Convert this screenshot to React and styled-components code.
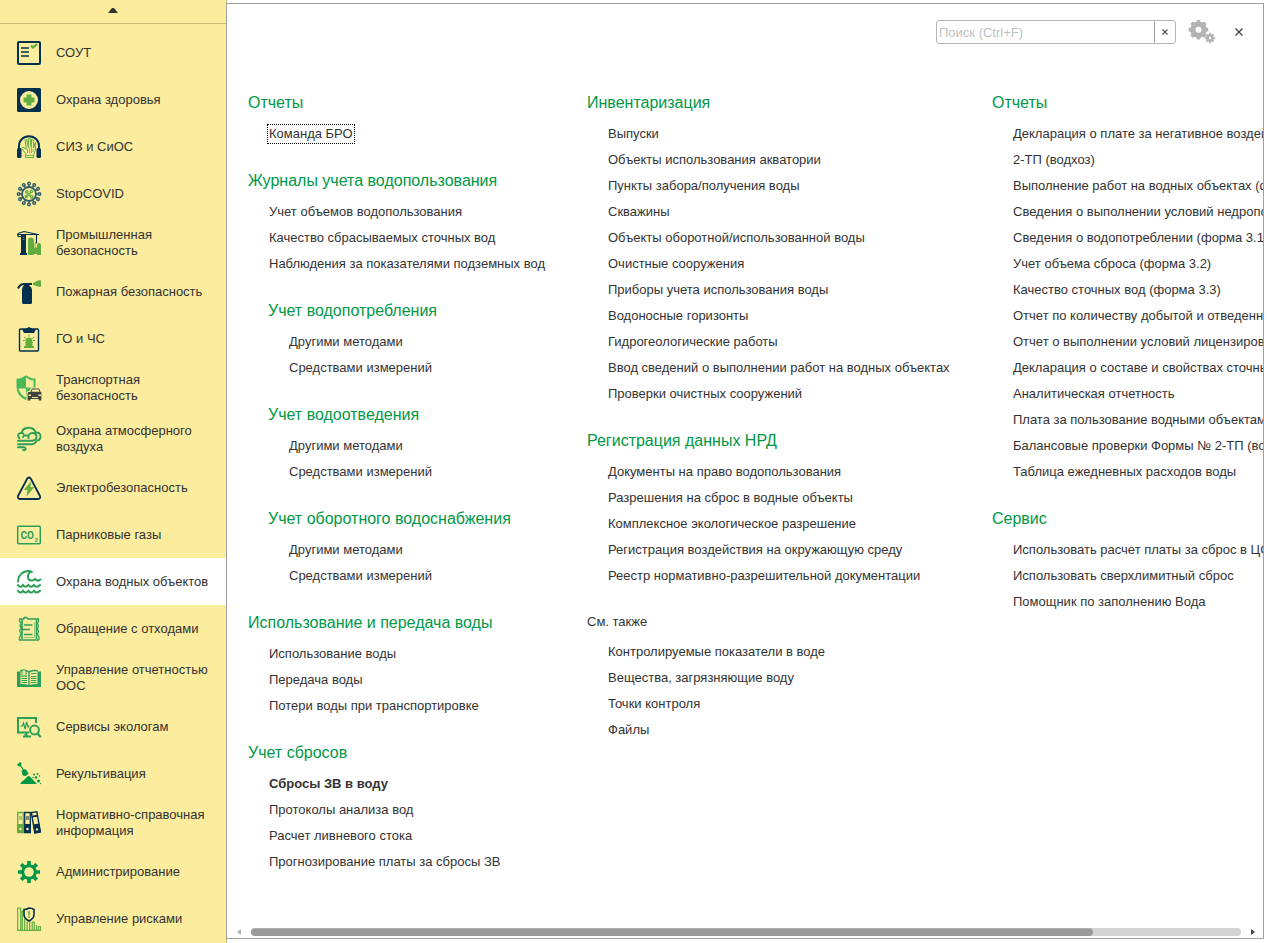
import React, { useRef, useState } from "react";
import styled, { createGlobalStyle } from "styled-components";

const GlobalStyle = createGlobalStyle`
  * {
    box-sizing: border-box;
  }
  body {
    margin: 0;
    background: #fff;
    color: #333;
    font-family: "Liberation Sans", Arial, sans-serif;
    font-size: 13px;
    line-height: 16px;
  }
  a {
    color: inherit;
    text-decoration: none;
  }
`;

const NAVY = "#03304f";
const LIME = "#62ad3d";
const GREEN = "#2c9f57";
const DEEP = "#009846";
const SAND = "#fbec9e";

const Main = styled.div`
  display: flex;
  height: 100vh;
  overflow: hidden;
`;

const Sidebar = styled.nav`
  display: flex;
  flex-direction: column;
  flex: none;
  width: 227px;
  background: ${SAND};
  border-right: 1px solid #c6bb75;
  overflow: hidden;
`;

const ScrollUp = styled.button`
  display: flex;
  flex: none;
  align-items: center;
  justify-content: center;
  height: 24px;
  margin-bottom: 5px;
  padding: 0 0 2px;
  background: none;
  border: 0;
  border-bottom: 1px solid #c6bb75;
`;

const NavItem = styled.a`
  display: flex;
  flex: none;
  align-items: center;
  gap: 14px;
  min-height: 47px;
  padding: 10px 12px 9px 16px;
  background: ${(p) => (p.$active ? "#fff" : "none")};
`;

const NavIcon = styled.svg`
  flex: none;
  width: 26px;
  height: 26px;
  margin: -2px 0;
`;

const Panel = styled.main`
  display: flex;
  flex-direction: column;
  flex: 1;
  min-width: 0;
  margin: 3px 3px 4px -1px;
  background: #fff;
  border: 1px solid #a0a0a0;
`;

const TopBar = styled.header`
  display: flex;
  flex: none;
  align-items: center;
  justify-content: flex-end;
  height: 56px;
  padding-right: 15px;
`;

const SearchBox = styled.div`
  display: flex;
  width: 240px;
  height: 24px;
  margin-right: 12px;
  border: 1px solid #b3b3b3;
  border-radius: 3px;
`;

const SearchInput = styled.input`
  flex: 1;
  min-width: 0;
  padding: 2px 2px 0;
  border: 0;
  outline: 0;
  background: none;
  font: inherit;
  &::placeholder {
    color: #bfbfbf;
    opacity: 1;
  }
`;

const IconButton = styled.button`
  display: flex;
  align-items: center;
  justify-content: center;
  padding: 0;
  background: none;
  border: 0;
`;

const ClearButton = styled(IconButton)`
  width: 21px;
  border-left: 1px solid #a0a0a0;
`;

const CloseButton = styled(IconButton)`
  width: 18px;
  height: 18px;
  margin-left: 14px;
`;

const Viewport = styled.div`
  flex: 1;
  min-height: 0;
  overflow-x: auto;
  overflow-y: hidden;
  scrollbar-width: none;
`;

const Columns = styled.div`
  display: grid;
  grid-template-columns: 339px 405px max-content;
  width: 117%;
  padding: 25px 0 0 21px;
  white-space: nowrap;
`;

const Section = styled.section`
  margin: 0 0 16px ${(p) => (p.$nested ? "20px" : "0")};
`;

const Heading = styled.h2`
  margin: 0;
  color: ${(p) => (p.$plain ? "#333" : DEEP)};
  font-size: ${(p) => (p.$plain ? "13px" : "16px")};
  font-weight: normal;
  line-height: ${(p) => (p.$plain ? "34px" : "36px")};
`;

const Links = styled.ul`
  margin: 0;
  padding: 0 0 0 19px;
  list-style: none;
`;

const LinkRow = styled.li`
  display: flex;
  align-items: center;
  height: 26px;
`;

const Command = styled.a`
  padding: 1px;
  border: 1px ${(p) => (p.$focused ? "dotted #000" : "solid transparent")};
  font-weight: ${(p) => (p.$bold ? "bold" : "normal")};
`;

const ScrollBar = styled.div`
  display: flex;
  flex: none;
  align-items: center;
  gap: 10px;
  height: 8px;
  margin: 0 8px 2px 10px;
`;

const Track = styled.div`
  flex: 1;
  height: 8px;
  background: #d4d4d4;
  border-radius: 4px;
`;

const Thumb = styled.div`
  width: 85%;
  height: 8px;
  background: #9a9a9a;
  border-top: 1px solid #b0b0b0;
  border-radius: 4px;
`;

const gearPath = (cx, cy, outer, inner, teeth) => {
  const points = [];
  for (let i = 0; i < teeth; i++) {
    const a = (i * 2 * Math.PI) / teeth;
    const step = Math.PI / teeth;
    [
      [outer, -0.42],
      [outer, 0.42],
      [inner, 0.6],
      [inner, 1.4],
    ].forEach(([r, k]) => {
      points.push(`${(cx + r * Math.cos(a + k * step)).toFixed(2)} ${(cy + r * Math.sin(a + k * step)).toFixed(2)}`);
    });
  }
  return `M${points.join("L")}Z`;
};

const spikes = Array.from({ length: 12 }, (_, i) => i * 30);

// все иконки меню рисуются в поле 26x26
const icons = {
  sout: (
    <>
      <rect x="2" y="2" width="22" height="22" rx="1" fill="none" stroke={NAVY} strokeWidth="2" />
      <path d="M5 8h8M5 12h8M5 16h8" stroke={NAVY} strokeWidth="1.6" />
      <path d="M15 5.500l2 2L21 4" fill="none" stroke={LIME} strokeWidth="2.200" />
    </>
  ),
  health: (
    <>
      <rect x="1" y="1" width="24" height="24" rx="1.5" fill={NAVY} />
      <circle cx="13" cy="13" r="9" fill={SAND} />
      <path d="M13 7.500v11M7.500 13h11" stroke={LIME} strokeWidth="5" />
    </>
  ),
  siz: (
    <>
      <path d="M3 15v-3a10 9.800 0 0 1 20 0v3" fill="none" stroke={NAVY} strokeWidth="2" />
      <rect x="1" y="14" width="4.500" height="10" rx="1.500" fill={NAVY} />
      <rect x="20.500" y="14" width="4.500" height="10" rx="1.500" fill={NAVY} />
      <path
        d="M9.500 23.500h8.200v-3l1.600-4V8.500l-1.700 5.500-.3-8-1.800-.5-.5 8-.8-9h-1.700l-.2 9-1.700-8-1.500.6 1.200 9-3.800-2-.8 1.300 4 5.300z"
        fill="none"
        stroke={LIME}
        strokeWidth="1"
      />
      <path d="M11.500 15v4M13.500 14v5M15.500 14v5M17 15v3M9.500 21.500h8" stroke={LIME} strokeWidth=".8" />
    </>
  ),
  covid: (
    <>
      <circle cx="13" cy="13" r="7" fill="none" stroke="#315f68" strokeWidth="1.800" />
      {spikes.map((a) => (
        <g key={a} transform={`rotate(${a} 13 13)`}>
          <path d="M13 6V3.500" stroke="#315f68" strokeWidth="1.500" />
          <circle cx="13" cy="2.600" r="1.300" fill="none" stroke="#315f68" strokeWidth="1.400" />
        </g>
      ))}
      <g fill="none" stroke={LIME} strokeWidth="1.300">
        <circle cx="10.800" cy="10.800" r="1.200" />
        <circle cx="15.300" cy="10.500" r="1.200" />
        <circle cx="13" cy="13.500" r="1.200" />
        <circle cx="10.300" cy="15.500" r="1" />
        <circle cx="15.600" cy="15.800" r="1.200" />
      </g>
    </>
  ),
  industry: (
    <>
      <path d="M12 25V10.500Q12 7.500 14.800 7.500T18 10.500V25z" fill={LIME} />
      <path d="M21 25V15q0-2 2-2t2 2v10zM18 18h3v6h-3z" fill={LIME} />
      <path d="M19 14v4h2" fill="none" stroke={LIME} />
      <path d="M5 5h5v18h1v2H4v-2h1z" fill={NAVY} />
      <path d="M6.500 7.500h2M6.500 9.500h2" stroke="#6c8378" strokeWidth=".8" />
      <path d="M1 4.500h22M2 3.500l6-2 14 3M2 3.500v3h3M20.500 4.500v6" fill="none" stroke={NAVY} strokeWidth="1.200" />
      <path d="M20.500 10v3h-1.500" fill="none" stroke={NAVY} strokeWidth="1" />
    </>
  ),
  fire: (
    <>
      <path d="M2 9.500Q4 5 8 5h8" fill="none" stroke={NAVY} strokeWidth="2.200" />
      <path d="M7.500 4h6v3q2.500 1 2.500 4v12.500q0 1.500-1.500 1.500h-7Q6 25 6 23.500V11q0-3 1.500-4z" fill={NAVY} />
      <path d="M17 4l5-2.500q3-.500 3 0v6q-1 .500-3 0L17 6z" fill={LIME} />
    </>
  ),
  siren: (
    <>
      <rect x="3.500" y="3" width="19" height="22" rx="1" fill="none" stroke={NAVY} strokeWidth="1.400" />
      <path d="M6 3h4V2h1.500Q13 0 14.500 2H16v1h4l-2 4H8z" fill={NAVY} />
      <path d="M9.500 20v-5Q9.500 11.500 13 11.500t3.500 3.500v5H18v2H8v-2z" fill={LIME} />
      <path d="M8 11l1.800 1.500M18 11l-1.800 1.500M7 14.500h2M17 14.500h2M13 8.500v2" stroke={LIME} />
    </>
  ),
  transport: (
    <>
      <path d="M.500 3.500Q4.500 4 7 2q2-1.500 3-1.500T13 2q3 2 6.500 1.500V12q-.500 9-9.500 13Q.500 21 .500 12z" fill="#48b957" />
      <path d="M10 2.500q3 2.500 7.500 3V12.500H10z" fill={SAND} />
      <path d="M2.500 13.500H10v9q-6-3-7.500-9z" fill={SAND} />
      <path
        d="M11 18l1-1.500h2L15.500 13h8l1.500 3.500h1V26h-4v-1.500h-7V26h-4z"
        fill="#3f453e"
        stroke={SAND}
        strokeWidth="1.200"
      />
      <path d="M15.500 16.800l1-2.300h6l1 2.300z" fill={SAND} />
      <path d="M12.500 19.500H15V21h-2.500zM22.500 19.500H25V21h-2.500zM16 22h6v1h-6z" fill={SAND} />
    </>
  ),
  air: (
    <g fill="none" stroke={GREEN} strokeWidth="1.900" strokeLinecap="round">
      <path d="M3.500 12.500Q0 8 5 6.800q1.500 0 2.500 1M6 6.500q.500-4 5-4.500 2.500-.500 3.500 0 4 .500 5 4.500 5-.500 5 4 0 3.500-3.500 4" />
      <path d="M2 14.800h14q4.500-.300 4.500-4 0-3.800-4-3.800-4.500 0-4 5" />
      <path d="M7 11q2-3 5-1M2 18.300h14q3-.300 4-2.500M2 21.300h5.500q2.500.200 2 2-.800 1.500-2.500.700" />
    </g>
  ),
  electro: (
    <>
      <path
        d="M11.300 3.500q1.700-2 3.400 0l9.300 17.500q.8 3-2 3H4q-2.800 0-2-3z"
        fill="none"
        stroke={NAVY}
        strokeWidth="1.800"
        strokeLinejoin="round"
      />
      <path d="M14.500 7.500L8.500 14.500h3.500L11 20.500l6.500-8h-3.500z" fill={LIME} stroke={LIME} strokeWidth=".8" />
    </>
  ),
  co2: (
    <>
      <rect x="1.700" y="4.200" width="22.600" height="17.600" rx="1" fill="none" stroke={GREEN} strokeWidth="1.500" />
      <text x="4.500" y="16.500" fontSize="10" fontWeight="bold" fill={GREEN} fontFamily="Roboto, sans-serif">
        CO
      </text>
      <text x="18.500" y="19.500" fontSize="6" fontWeight="bold" fill={GREEN} fontFamily="Roboto, sans-serif">
        2
      </text>
    </>
  ),
  water: (
    <g fill="none" stroke={GREEN} strokeWidth="2" strokeLinecap="round">
      <path d="M2 12.500Q2.500 3 12 2q2-.200 3.500.800-3.500 1-3.500 4.700 0 4 3.500 4 2.500 0 3.500-1.500 3 3 5.500.500" />
      <path d="M2 16q1.500 2.500 3.500 1.500l1.500-1.500q2.500 3.500 5.500 0 2.500 3.500 5.500 0 2.500 3.500 6 0" />
      <path d="M2 21.800q1.500 2.500 3.500 1.500l1.500-1.500q2.500 3.500 5.500 0 2.500 3.500 5.500 0 2.500 3.500 6 0" />
    </g>
  ),
  waste: (
    <g fill="none" stroke={GREEN}>
      <path d="M6 3.500V23M20.500 3.500V23" strokeWidth="1.600" />
      <path d="M3 3h4.500l1-1.500h2L12 3h11M3 24h20" strokeWidth="1.700" />
      <path d="M3.500 2.500V5l1.500 2-1 2 1 3.500-1.500 2.500 1.500 2.500-1 3-1 3.500M22.500 2.500V5L21.500 7.500l1 2.500-1 3 1 2.500-1 2.500 1.500 3v3" strokeWidth="1.200" />
      <path d="M8 9h8.500M5 13.500h9M8 18.500h8.500" strokeWidth="1.300" />
      <path d="M18.500 6v15.500H7.500" strokeWidth=".5" />
    </g>
  ),
  book: (
    <>
      <path d="M1 6.500h3V5q5-1 9 1Q17 4 22 5v1.500h3V22H1z" fill={GREEN} />
      <path d="M4.500 6.500q4-.8 7.800 1V20q-3.800-1.500-7.800-1zM21.500 6.500q-4-.8-7.800 1V20q3.800-1.500 7.800-1z" fill={SAND} />
      <path d="M5.500 13.500h5.500M5.500 15.500h5.500M5.500 17.500h5.500M15 8.500h5.500M15 11.500h5.500M15 13.500h5.500M15 15.500h5.500M15 17.500h5.500" stroke={GREEN} />
      <path d="M6 5h4v7l-2-1.500L6 12z" fill={SAND} stroke={GREEN} />
    </>
  ),
  services: (
    <g fill="none" stroke={GREEN}>
      <path d="M20 9V4H2v14.500h11" strokeWidth="2" />
      <path d="M7 22.500h8" strokeWidth="2" />
      <path d="M10 19.500v3" strokeWidth="3" />
      <path d="M4.500 12h1.800l1.200-3 1.600 6 1.500-7 1.500 5 1-1.500" strokeWidth="1.200" />
      <circle cx="18.500" cy="16" r="4.400" strokeWidth="2" />
      <path d="M21.500 19.500l3.300 3.800" strokeWidth="2.200" />
    </g>
  ),
  recult: (
    <g fill={DEEP}>
      <path d="M1 4l3-3 1.500 1-.5 3-2 .5z" />
      <path d="M4.500 4.500l4 6" stroke={DEEP} strokeWidth="1.200" />
      <path d="M5.500 9.500l4-1.500 3.200 4.500-3 2.500-3-.5z" />
      <path d="M4 23q2-3 4-4l4-4 2 .5 6 6.500 1 1z" />
      <circle cx="18" cy="13.500" r="1" />
      <circle cx="21.500" cy="13" r="1" />
      <circle cx="20" cy="16.500" r="1.200" />
      <circle cx="23.500" cy="15" r=".8" />
      <circle cx="22.500" cy="20" r="1.500" />
      <circle cx="17" cy="16.500" r=".7" />
      <circle cx="24.500" cy="22.500" r=".7" />
    </g>
  ),
  folders: (
    <>
      <path d="M1.700 2.500h5.600v20H1.700z" fill="none" stroke={LIME} strokeWidth="1.300" />
      <path d="M1 14h7v9H1z" fill={LIME} />
      <path d="M3 7h3M3 9h3" stroke={LIME} />
      <circle cx="4.500" cy="19" r="1.300" fill={SAND} />
      <path d="M8.700 2.500h5.600v20H8.700z" fill="none" stroke={NAVY} strokeWidth="1.300" />
      <path d="M8 14h7v9H8z" fill={NAVY} />
      <path d="M10 7h3M10 9h3" stroke={NAVY} />
      <circle cx="11.500" cy="19" r="1.300" fill={SAND} />
      <g transform="rotate(-10 20 12)">
        <path d="M17 2h5.600v20.500H17z" fill="none" stroke={NAVY} strokeWidth="1.400" />
        <path d="M16.500 14h6.500v9h-6.500zM17 5h5.500v2H17z" fill={NAVY} />
        <circle cx="19.700" cy="19.500" r="1.200" fill={SAND} />
      </g>
    </>
  ),
  admin: (
    <>
      <path d={gearPath(13, 13, 11.2, 7.8, 8)} fill={DEEP} />
      <circle cx="13" cy="13" r="4.800" fill={SAND} />
    </>
  ),
  risk: (
    <>
      <g fill="none" stroke={LIME} strokeWidth="1.200">
        <path d="M1 24.400h24" />
        <path d="M1.700 24V2h3v22M6.300 24V5h2M6.300 5.500v-1M8.700 13v11M11.200 24v-8.500M13.700 24v-9M16.200 24v-8h2v8M20.500 24v-5M22.500 24v-3.500h2V24" />
      </g>
      <path d="M13 2q3 0 5 1.500v5q0 4-5 6.500-5-2.500-5-6.500v-5Q11 3.500 13 2z" fill={SAND} stroke={NAVY} strokeWidth="1.600" />
      <path d="M13 5v4.500M13 10.500V12" stroke={LIME} strokeWidth="1.600" />
    </>
  ),
};

const menu = [
  ["sout", "СОУТ"],
  ["health", "Охрана здоровья"],
  ["siz", "СИЗ и СиОС"],
  ["covid", "StopCOVID"],
  ["industry", "Промышленная безопасность"],
  ["fire", "Пожарная безопасность"],
  ["siren", "ГО и ЧС"],
  ["transport", "Транспортная безопасность"],
  ["air", "Охрана атмосферного воздуха"],
  ["electro", "Электробезопасность"],
  ["co2", "Парниковые газы"],
  ["water", "Охрана водных объектов"],
  ["waste", "Обращение с отходами"],
  ["book", "Управление отчетностью ООС"],
  ["services", "Сервисы экологам"],
  ["recult", "Рекультивация"],
  ["folders", "Нормативно-справочная информация"],
  ["admin", "Администрирование"],
  ["risk", "Управление рисками"],
];

const columns = [
  [
    { title: "Отчеты", items: ["Команда БРО"] },
    {
      title: "Журналы учета водопользования",
      items: [
        "Учет объемов водопользования",
        "Качество сбрасываемых сточных вод",
        "Наблюдения за показателями подземных вод",
      ],
    },
    { title: "Учет водопотребления", nested: true, items: ["Другими методами", "Средствами измерений"] },
    { title: "Учет водоотведения", nested: true, items: ["Другими методами", "Средствами измерений"] },
    { title: "Учет оборотного водоснабжения", nested: true, items: ["Другими методами", "Средствами измерений"] },
    {
      title: "Использование и передача воды",
      items: ["Использование воды", "Передача воды", "Потери воды при транспортировке"],
    },
    {
      title: "Учет сбросов",
      items: ["Сбросы ЗВ в воду", "Протоколы анализа вод", "Расчет ливневого стока", "Прогнозирование платы за сбросы ЗВ"],
    },
  ],
  [
    {
      title: "Инвентаризация",
      items: [
        "Выпуски",
        "Объекты использования акватории",
        "Пункты забора/получения воды",
        "Скважины",
        "Объекты оборотной/использованной воды",
        "Очистные сооружения",
        "Приборы учета использования воды",
        "Водоносные горизонты",
        "Гидрогеологические работы",
        "Ввод сведений о выполнении работ на водных объектах",
        "Проверки очистных сооружений",
      ],
    },
    {
      title: "Регистрация данных НРД",
      items: [
        "Документы на право водопользования",
        "Разрешения на сброс в водные объекты",
        "Комплексное экологическое разрешение",
        "Регистрация воздействия на окружающую среду",
        "Реестр нормативно-разрешительной документации",
      ],
    },
    {
      title: "См. также",
      plain: true,
      items: ["Контролируемые показатели в воде", "Вещества, загрязняющие воду", "Точки контроля", "Файлы"],
    },
  ],
  [
    {
      title: "Отчеты",
      items: [
        "Декларация о плате за негативное воздей",
        "2-ТП (водхоз)",
        "Выполнение работ на водных объектах (ф",
        "Сведения о выполнении условий недропо",
        "Сведения о водопотреблении (форма 3.1)",
        "Учет объема сброса (форма 3.2)",
        "Качество сточных вод (форма 3.3)",
        "Отчет по количеству добытой и отведенно",
        "Отчет о выполнении условий лицензирова",
        "Декларация о составе и свойствах сточны",
        "Аналитическая отчетность",
        "Плата за пользование водными объектам",
        "Балансовые проверки Формы № 2-ТП (во",
        "Таблица ежедневных расходов воды",
      ],
    },
    {
      title: "Сервис",
      items: ["Использовать расчет платы за сброс в ЦС", "Использовать сверхлимитный сброс", "Помощник по заполнению Вода"],
    },
  ],
];

const App = () => {
  const viewport = useRef(null);
  const [query, setQuery] = useState("");
  const [offset, setOffset] = useState(0);

  const onScroll = (e) => {
    const { scrollLeft, scrollWidth, clientWidth } = e.target;
    const rest = scrollWidth - clientWidth;
    setOffset(rest > 0 ? (scrollLeft / rest) * 15 : 0);
  };

  const scrollBy = (left) => viewport.current.scrollBy({ left });

  return (
    <Main>
      <GlobalStyle />
      <Sidebar aria-label="Разделы">
        <ScrollUp type="button" aria-label="Вверх">
          <svg width="10" height="5" viewBox="0 0 10 5">
            <path d="M0 5L4 0h2l4 5z" fill="#333" />
          </svg>
        </ScrollUp>
        {menu.map(([icon, label]) => (
          <NavItem key={icon} href="#" $active={icon === "water"}>
            <NavIcon viewBox="0 0 26 26" aria-hidden="true">
              {icons[icon]}
            </NavIcon>
            <span>{label}</span>
          </NavItem>
        ))}
      </Sidebar>
      <Panel>
        <TopBar>
          <SearchBox>
            <SearchInput
              type="text"
              aria-label="Поиск"
              placeholder="Поиск (Ctrl+F)"
              value={query}
              onChange={(e) => setQuery(e.target.value)}
            />
            <ClearButton type="button" aria-label="Очистить" onClick={() => setQuery("")}>
              <svg width="6" height="6" viewBox="0 0 6 6">
                <path d="M.5.5l5 5M5.500.5l-5 5" stroke="#555" strokeWidth="1.200" />
              </svg>
            </ClearButton>
          </SearchBox>
          <IconButton type="button" aria-label="Настройки">
            <svg width="28" height="24" viewBox="0 0 28 24">
              <path
                d={`${gearPath(10.5, 9.7, 10, 8.3, 8)}M13.500 9.700a3 3 0 1 0-6 0 3 3 0 1 0 6 0z${gearPath(22, 18, 5.2, 4, 8)}M23.200 18a1.200 1.200 0 1 0-2.400 0 1.200 1.200 0 1 0 2.400 0z`}
                fill="#b3b3b3"
                fillRule="evenodd"
              />
            </svg>
          </IconButton>
          <CloseButton type="button" aria-label="Закрыть">
            <svg width="8" height="8" viewBox="0 0 8 8">
              <path d="M.5.5l7 7M7.500.5l-7 7" stroke="#444" strokeWidth="1.300" />
            </svg>
          </CloseButton>
        </TopBar>
        <Viewport ref={viewport} onScroll={onScroll}>
          <Columns>
            {columns.map((sections, i) => (
              <div key={i}>
                {sections.map((section) => (
                  <Section key={section.title} $nested={section.nested}>
                    <Heading $plain={section.plain}>{section.title}</Heading>
                    <Links>
                      {section.items.map((item) => (
                        <LinkRow key={item}>
                          <Command href="#" $focused={item === "Команда БРО"} $bold={item === "Сбросы ЗВ в воду"}>
                            {item}
                          </Command>
                        </LinkRow>
                      ))}
                    </Links>
                  </Section>
                ))}
              </div>
            ))}
          </Columns>
        </Viewport>
        <ScrollBar>
          <IconButton type="button" aria-label="Влево" onClick={() => scrollBy(-100)}>
            <svg width="4" height="6" viewBox="0 0 4 6">
              <path d="M4 0v6L0 3z" fill="#b0b0b0" />
            </svg>
          </IconButton>
          <Track>
            <Thumb style={{ marginLeft: `${offset}%` }} />
          </Track>
          <IconButton type="button" aria-label="Вправо" onClick={() => scrollBy(100)}>
            <svg width="4" height="6" viewBox="0 0 4 6">
              <path d="M0 0v6l4-3z" fill="#444" />
            </svg>
          </IconButton>
        </ScrollBar>
      </Panel>
    </Main>
  );
};

export default App;
